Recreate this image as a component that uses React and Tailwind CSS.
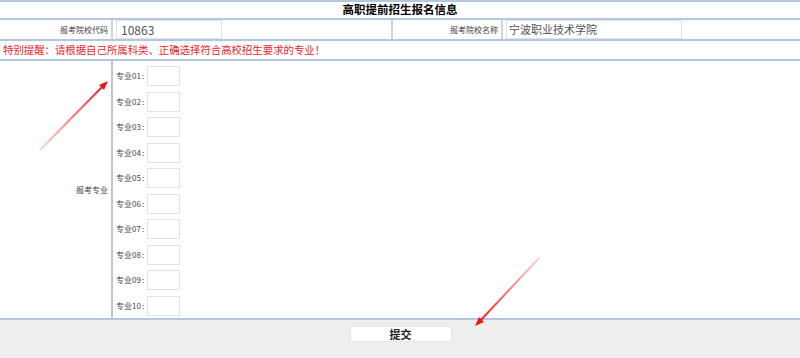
const majors = ['01', '02', '03', '04', '05', '06', '07', '08', '09', '10'];

const font = { fontFamily: '"Noto Sans CJK SC", "Noto Sans", sans-serif' };

export default function App() {
  return (
    <div className="relative w-[800px] h-[358px] bg-white overflow-hidden text-[#333]" style={font}>
      <div className="border-t-2 border-[#b3c7e3]">
        <div className="h-[18px] flex items-center justify-center border-b-2 border-[#b3c7e3] text-[11.5px] font-bold text-black leading-none">
          高职提前招生报名信息
        </div>

        <div className="h-[21px] flex border-b-2 border-[#b3c7e3]">
          <div className="w-[111px] flex items-center justify-end pr-[3px] text-[8px] text-[#444]">报考院校代码</div>
          <div className="w-[280px] border-l-2 border-[#c8d6ea] flex items-center pl-[3px]">
            <div className="w-[106px] h-[19px] border border-[#e2e2e2] flex items-center pl-[4px] text-[12px] text-[#555] leading-none">10863</div>
          </div>
          <div className="w-[110px] border-l-2 border-[#c8d6ea] flex items-center justify-end pr-[3px] text-[8px] text-[#444]">报考院校名称</div>
          <div className="flex-1 border-l-2 border-[#c8d6ea] flex items-center pl-[3px]">
            <div className="w-[176px] h-[19px] border border-[#e2e2e2] flex items-center pl-[2px] text-[11px] text-[#555] leading-none">宁波职业技术学院</div>
          </div>
        </div>

        <div className="h-[20px] flex items-center pl-[3px] border-b-2 border-[#b3c7e3] text-[10.4px] text-[#e8262b] leading-none">
          特别提醒：请根据自己所属科类、正确选择符合高校招生要求的专业！
        </div>

        <div className="h-[259px] flex border-b-2 border-[#b3c7e3]">
          <div className="w-[111px] flex items-center justify-end pr-[3px] text-[8px] text-[#444]">报考专业</div>
          <div className="flex-1 border-l-2 border-[#b3c7e3] flex flex-col gap-[5.5px] pt-[5px] pl-[3px]">
            {majors.map((m) => (
              <div key={m} className="flex items-center h-[20px]">
                <span className="w-[31px] shrink-0 whitespace-nowrap text-[8px] text-[#444] leading-none">
                  专业{m}<span className="ml-[1px]">:</span>
                </span>
                <div className="w-[33px] h-[20px] shrink-0 border border-[#e2e2e2]"></div>
              </div>
            ))}
          </div>
        </div>

        <div className="h-[38px] bg-[#eeeeee] flex items-start justify-center pt-[6px]">
          <button className="w-[102px] h-[16px] bg-white border border-[#e6e6e6] text-[11px] font-bold text-[#222] leading-none ml-[1px]" style={font}>
            提交
          </button>
        </div>
      </div>

      <svg className="absolute inset-0 pointer-events-none" width="800" height="358">
        <defs>
          <linearGradient id="g1" x1="40" y1="150" x2="107" y2="82" gradientUnits="userSpaceOnUse">
            <stop offset="0" stopColor="#ff3030" stopOpacity="0.2" />
            <stop offset="1" stopColor="#e81818" />
          </linearGradient>
          <linearGradient id="g2" x1="540" y1="257" x2="476" y2="325" gradientUnits="userSpaceOnUse">
            <stop offset="0" stopColor="#ff3030" stopOpacity="0.2" />
            <stop offset="1" stopColor="#e81818" />
          </linearGradient>
        </defs>
        <line x1="40" y1="150" x2="103" y2="86" stroke="url(#g1)" strokeWidth="2" />
        <polygon points="108,81 99,85 104,90" fill="#e81818" />
        <line x1="540" y1="257" x2="480" y2="321" stroke="url(#g2)" strokeWidth="2" />
        <polygon points="475,326 479,317 484,322" fill="#e81818" />
      </svg>
    </div>
  );
}
